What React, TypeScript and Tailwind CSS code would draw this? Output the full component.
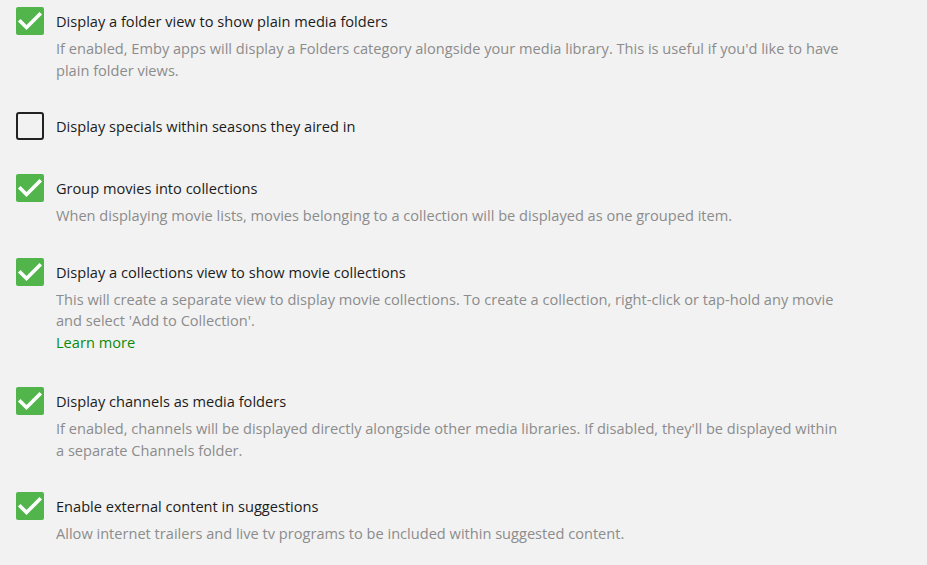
import React from "react";

interface OptionProps {
  checked?: boolean;
  label: string;
  lines?: string[];
  link?: string;
  className?: string;
}

function Box({ checked }: { checked?: boolean }) {
  if (!checked) {
    return (
      <div className="w-[28px] h-[28px] shrink-0 rounded-[3px] border-[2px] border-[#222222]" />
    );
  }
  return (
    <div className="w-[28px] h-[28px] shrink-0 rounded-[2px] bg-[#52b54b] flex items-center justify-center">
      <svg width="28" height="28" viewBox="0 0 28 28" fill="none">
        <path
          d="M4.5 14.5 L10.5 20.5 L23.5 7.5"
          stroke="white"
          strokeWidth="3.6"
          strokeLinecap="square"
          strokeLinejoin="miter"
        />
      </svg>
    </div>
  );
}

function Option({ checked = true, label, lines, link, className = "" }: OptionProps) {
  return (
    <div className={className}>
      <div className="flex items-center gap-[12px]">
        <Box checked={checked} />
        <span className="text-[14.6px] text-[#1c1c1c] leading-[28px]">{label}</span>
      </div>
      {lines && (
        <div className="pl-[40px] mt-[3px] text-[14.6px] leading-[21.5px] text-[#8c8c8c]">
          {lines.map((l) => (
            <div key={l} className="whitespace-nowrap">
              {l}
            </div>
          ))}
          {link && <div className="text-[#0b8a0b]">{link}</div>}
        </div>
      )}
    </div>
  );
}

export default function App() {
  return (
    <div
      className="min-h-[565px] bg-[#f2f2f2] pl-[16px] pt-[7px]"
      style={{ fontFamily: '"Open Sans", "Noto Sans", sans-serif' }}
    >
      <Option
        className="mb-[31px]"
        label="Display a folder view to show plain media folders"
        lines={[
          "If enabled, Emby apps will display a Folders category alongside your media library. This is useful if you'd like to have",
          "plain folder views.",
        ]}
      />
      <Option className="mb-[34px]" checked={false} label="Display specials within seasons they aired in" />
      <Option
        className="mb-[31px]"
        label="Group movies into collections"
        lines={[
          "When displaying movie lists, movies belonging to a collection will be displayed as one grouped item.",
        ]}
      />
      <Option
        className="mb-[34px]"
        label="Display a collections view to show movie collections"
        lines={[
          "This will create a separate view to display movie collections. To create a collection, right-click or tap-hold any movie",
          "and select 'Add to Collection'.",
        ]}
        link="Learn more"
      />
      <Option
        className="mb-[31px]"
        label="Display channels as media folders"
        lines={[
          "If enabled, channels will be displayed directly alongside other media libraries. If disabled, they'll be displayed within",
          "a separate Channels folder.",
        ]}
      />
      <Option
        label="Enable external content in suggestions"
        lines={["Allow internet trailers and live tv programs to be included within suggested content."]}
      />
    </div>
  );
}
